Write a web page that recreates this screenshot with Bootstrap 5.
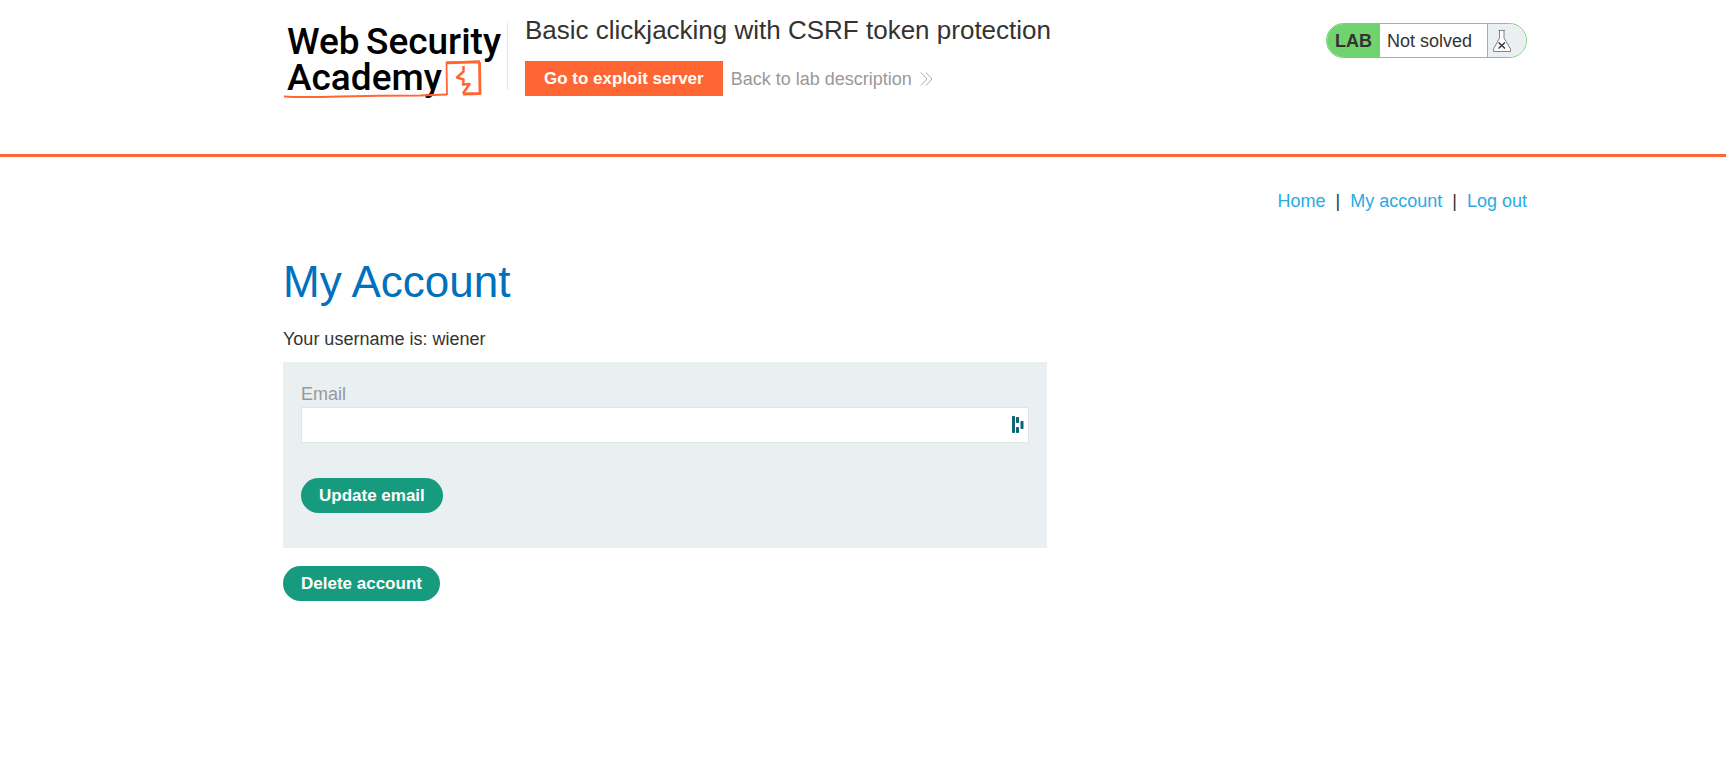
<!DOCTYPE html>
<html lang="en">
<head>
<meta charset="utf-8">
<meta name="viewport" content="width=device-width, initial-scale=1">
<title>Basic clickjacking with CSRF token protection</title>
<link href="https://cdn.jsdelivr.net/npm/bootstrap@5.3.0/dist/css/bootstrap.min.css" rel="stylesheet">
<style>
body{font:18px/24px "Liberation Sans",Arial,sans-serif;color:#333332;background:#fff}
a{text-decoration:none}
.page-wrap{max-width:1328px;margin:0 auto;padding-left:84px}
.lab-header{border-bottom:3px solid #ff6633;padding:15px 0 51px}
.logo{width:220px;height:88px;overflow:visible}
.logo text{font:500 37px Roboto,sans-serif;fill:#000}
.lab-title{font-size:26px;line-height:30px;margin-bottom:16px}
.lab-info{border-left:1px solid #e5e5e5;height:67px;margin-top:8px;padding-left:17px}
.lab-info-inner{margin-top:-8px}
.btn{font-size:17px;font-weight:700;line-height:23px;padding:6px 18px;border:0;color:#fff}
.btn-exploit{background:#ff6633;border-radius:0;padding:6px 19px}
.btn-green{background:#169b7e;border-radius:18px}
.btn-exploit:hover{background:#e85a2c;color:#fff}
.btn-green:hover{background:#12856c;color:#fff}
.back-link{color:#999;gap:8px}
.lab-status{border:1px solid #71d36e;border-radius:18px;height:35px;margin-top:8px;overflow:hidden;line-height:34px}
.status-tag{background:#71d36e;font-weight:700;padding:0 8px}
.status-text{padding:0 15px 0 7px}
.status-flask{background:#eaeff2;border-left:1px solid #71d36e;padding:0 15px 0 5px}
.top-links{padding:32px 0 0;gap:10px}
.top-links a{color:#29abe2}
.account-title{color:#0071bc;font-size:44px;line-height:52px;margin:43px 0 19px;font-weight:400}
.account-area{max-width:764px}
.email-form{background:#eaeff2;padding:20px 18px 35px;margin:11px 0 18px}
.email-form label{color:#999;line-height:25px}
.email-form .btn{margin-top:35px}
.email-form .form-control{height:36px;border:1px solid #e3e4e4;border-radius:0;padding:4px 36px 4px 8px;font-size:18px}
.fill-icon{right:5px;top:9px}
</style>
</head>
<body>
<header class="lab-header">
  <div class="page-wrap d-flex align-items-start">
    <a href="#" class="pe-1" aria-label="Web Security Academy">
      <svg class="logo d-block" viewBox="283 15 220 88">
        <text x="287" y="54">Web</text><text x="366" y="54">Security</text>
        <text x="287" y="90">Academy</text>
        <g fill="none" stroke="#ff6633" stroke-linejoin="round">
          <path d="M284 96.500Q300 97.500 340 96.500T420 95.500L447 94.500" stroke-width="2.200"/>
          <path d="M447 95 446.500 62.500 480 61.500" stroke-width="1.800"/>
          <path d="M447 62.800 480 61.800M479.500 62 480 93.500 463 94" stroke-width="2.800"/>
          <path d="M463.500 66 463.500 71.500 457 77.500 463.500 79.500 463 84.500 469.500 84 463 93.500" stroke-width="2.500"/>
        </g>
      </svg>
    </a>
    <div class="lab-info me-auto">
      <div class="lab-info-inner">
        <h2 class="lab-title fw-normal">Basic clickjacking with CSRF token protection</h2>
        <div class="d-flex align-items-center gap-2">
          <button type="button" class="btn btn-exploit">Go to exploit server</button>
          <a href="#" class="back-link d-flex align-items-center">Back to lab description
            <svg width="13" height="14" fill="none" stroke="#999" stroke-width=".8"><path d="M1 .5 7 7 1 13.500M6 .5 12 7 6 13.500"/></svg>
          </a>
        </div>
      </div>
    </div>
    <div class="lab-status d-flex">
      <span class="status-tag">LAB</span>
      <span class="status-text">Not solved</span>
      <span class="status-flask d-flex align-items-center">
        <svg width="18" height="22" fill="none" stroke="#777"><path fill="#fff" d="M5.500 .5H12M6.500 .5V8L.5 19V21.500H17.500V19L11 8V.5" stroke-width=".9"/><path d="M5.500 12.500 12 18.500M12 12.500 5.500 18.500" stroke="#333" stroke-width="1.400"/></svg>
      </span>
    </div>
  </div>
</header>
<main class="page-wrap">
  <nav class="top-links d-flex justify-content-end" aria-label="Account">
    <a href="#">Home</a><span>|</span><a href="#">My account</a><span>|</span><a href="#">Log out</a>
  </nav>
  <h1 class="account-title">My Account</h1>
  <div class="account-area">
    <p class="mb-0">Your username is: wiener</p>
    <form class="email-form">
      <label for="email" class="d-block">Email</label>
      <div class="position-relative">
        <input type="email" id="email" class="form-control">
        <svg class="fill-icon position-absolute" width="12" height="18" fill="#0e6377"><rect width="3" height="17" rx=".7"/><rect x="4" y="1" width="3" height="6" rx=".7"/><rect x="4" y="11" width="3" height="6" rx=".7"/><rect x="8.500" y="5" width="3" height="8" rx=".7"/></svg>
      </div>
      <button type="submit" class="btn btn-green">Update email</button>
    </form>
    <button type="button" class="btn btn-green">Delete account</button>
  </div>
</main>
<script src="https://cdn.jsdelivr.net/npm/bootstrap@5.3.0/dist/js/bootstrap.bundle.min.js"></script>
</body>
</html>
